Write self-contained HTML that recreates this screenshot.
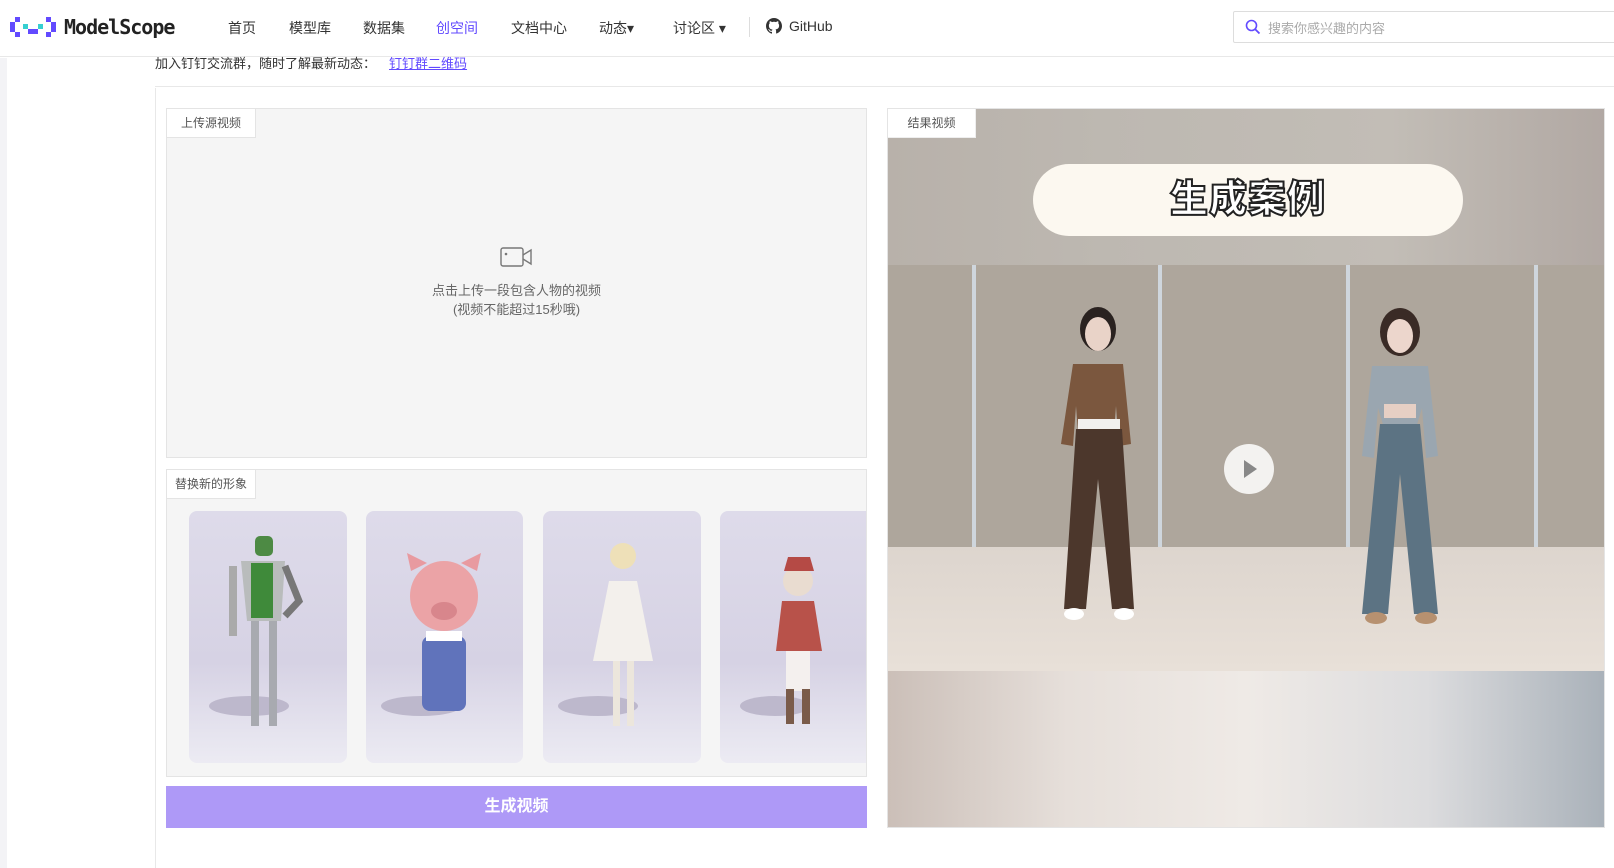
<!DOCTYPE html>
<html><head><meta charset="utf-8"><style>
*{margin:0;padding:0;box-sizing:border-box}
body{width:1614px;height:868px;overflow:hidden;background:#fff;font-family:"Liberation Sans","Noto Sans CJK SC",sans-serif;position:relative;color:#333}
.a{position:absolute}
.nav{font-size:14px;color:#333;top:18px}
.tab{background:#fff;border-right:1px solid #e4e4e4;border-bottom:1px solid #e4e4e4;font-size:12px;color:#555;text-align:center;line-height:29px}
.card{border-radius:8px;background:linear-gradient(#dedbea,#d6d2e4 60%,#ecebf3);overflow:hidden}
</style></head><body>
<div class="a" style="left:0;top:0;width:1614px;height:57px;border-bottom:1px solid #e8e8e8;background:#fff"></div>
<svg class="a" style="left:10px;top:14px" width="46" height="26" viewBox="0 0 46 26">
<rect x="0" y="8" width="5" height="10" fill="#624aff"/><rect x="5" y="3" width="5" height="5" fill="#624aff"/><rect x="5" y="18" width="5" height="5" fill="#624aff"/>
<rect x="41" y="8" width="5" height="10" fill="#624aff"/><rect x="36" y="3" width="5" height="5" fill="#624aff"/><rect x="36" y="18" width="5" height="5" fill="#624aff"/>
<rect x="13" y="10" width="5" height="5" fill="#36cfd1"/><rect x="28" y="10" width="5" height="5" fill="#36cfd1"/><rect x="18" y="15" width="10" height="5" fill="#624aff"/></svg>
<div class="a" style="left:64px;top:15px;font-size:20px;font-weight:bold;color:#222;font-family:'DejaVu Sans Mono',monospace;letter-spacing:-1px">ModelScope</div>
<div class="a nav" style="left:228px">首页</div>
<div class="a nav" style="left:289px">模型库</div>
<div class="a nav" style="left:363px">数据集</div>
<div class="a nav" style="left:436px;color:#624aff">创空间</div>
<div class="a nav" style="left:511px">文档中心</div>
<div class="a nav" style="left:599px">动态▾</div>
<div class="a nav" style="left:673px">讨论区 ▾</div>
<div class="a" style="left:749px;top:17px;width:1px;height:20px;background:#ddd"></div>
<svg class="a" style="left:766px;top:18px" width="16" height="16" viewBox="0 0 16 16"><path fill="#333" d="M8 0C3.6 0 0 3.6 0 8c0 3.5 2.3 6.5 5.5 7.6.4.1.5-.2.5-.4v-1.4c-2.2.5-2.7-1-2.7-1-.4-.9-.9-1.200-.9-1.2-.7-.5.1-.5.1-.5.8.1 1.2.8 1.2.8.7 1.2 1.9.9 2.3.7.1-.5.3-.9.5-1.1-1.800-.2-3.600-.9-3.600-4 0-.9.3-1.600.8-2.100-.1-.2-.4-1 .1-2.1 0 0 .7-.2 2.2.8.6-.2 1.3-.3 2-.3s1.4.1 2 .3c1.5-1 2.2-.8 2.2-.8.4 1.1.2 1.9.1 2.1.5.6.8 1.3.8 2.1 0 3.1-1.9 3.7-3.6 3.9.3.3.6.8.6 1.5v2.2c0 .2.1.5.6.4C13.7 14.5 16 11.5 16 8c0-4.4-3.6-8-8-8z"/></svg>
<div class="a nav" style="left:789px">GitHub</div>
<div class="a" style="left:1233px;top:11px;width:400px;height:32px;border:1px solid #ddd;border-radius:2px"></div>
<svg class="a" style="left:1245px;top:19px" width="16" height="16" viewBox="0 0 16 16"><circle cx="6.5" cy="6.5" r="5" fill="none" stroke="#624aff" stroke-width="1.6"/><path d="M10.2 10.2L14.5 14.5" stroke="#624aff" stroke-width="1.8"/></svg>
<div class="a" style="left:1268px;top:18px;font-size:13px;color:#aaa">搜索你感兴趣的内容</div>
<div class="a" style="left:0;top:58px;width:7px;height:810px;background:#f3f3f6"></div>
<div class="a" style="left:155px;top:55px;width:1459px;height:32px;border-bottom:1px solid #e8e8e8"></div>
<div class="a" style="left:155px;top:56px;font-size:13px;line-height:16px;color:#333">加入钉钉交流群，随时了解最新动态：<span style="color:#624aff;text-decoration:underline;margin-left:13px">钉钉群二维码</span></div>
<div class="a" style="left:155px;top:88px;width:1px;height:780px;background:#e8e8e8"></div>
<div class="a" style="left:166px;top:108px;width:701px;height:350px;background:#f5f5f5;border:1px solid #e4e4e4"></div>
<div class="a tab" style="left:167px;top:109px;width:89px;height:29px">上传源视频</div>
<svg class="a" style="left:500px;top:246px" width="33" height="22" viewBox="0 0 33 22"><rect x="1" y="2" width="22" height="18" rx="2" fill="none" stroke="#777" stroke-width="1.4"/><circle cx="6" cy="8" r="1.3" fill="#777"/><path d="M23 9l8-5v14l-8-5" fill="none" stroke="#777" stroke-width="1.4"/></svg>
<div class="a" style="left:166px;width:701px;top:281px;text-align:center;font-size:13px;color:#666;line-height:19px">点击上传一段包含人物的视频<br>(视频不能超过15秒哦)</div>
<div class="a" style="left:166px;top:469px;width:701px;height:308px;background:#f5f5f5;border:1px solid #e4e4e4"></div>
<div class="a tab" style="left:167px;top:470px;width:89px;height:29px">替换新的形象</div>
<div class="a" style="left:167px;top:511px;width:699px;height:252px;overflow:hidden">
<div class="a card" style="left:22px;top:0;width:158px;height:252px"><svg width="158" height="252"><ellipse cx="60" cy="195" rx="40" ry="10" fill="#bdb8cc"/><rect x="66" y="25" width="18" height="20" rx="5" fill="#4d8a44"/><path d="M52 50h44l-4 60H58z" fill="#b9bcbc"/><path d="M62 52h22v55H62z" fill="#3f8a3a"/><rect x="62" y="110" width="8" height="105" fill="#a8aab0"/><rect x="80" y="110" width="8" height="105" fill="#a8aab0"/><rect x="40" y="55" width="8" height="70" fill="#aaa"/><path d="M96 55l14 35-14 15" stroke="#777" stroke-width="7" fill="none"/></svg></div>
<div class="a card" style="left:199px;top:0;width:157px;height:252px"><svg width="157" height="252"><ellipse cx="55" cy="195" rx="40" ry="10" fill="#bdb8cc"/><ellipse cx="78" cy="85" rx="34" ry="35" fill="#eba3a6"/><path d="M45 60l-4-18 20 10zM111 60l4-18-20 10z" fill="#e89aa0"/><ellipse cx="78" cy="100" rx="13" ry="9" fill="#d8868c"/><rect x="56" y="125" width="44" height="75" rx="8" fill="#6073bb"/><rect x="60" y="120" width="36" height="10" fill="#fff"/></svg></div>
<div class="a card" style="left:376px;top:0;width:158px;height:252px"><svg width="158" height="252"><ellipse cx="55" cy="195" rx="40" ry="10" fill="#bdb8cc"/><circle cx="80" cy="45" r="13" fill="#eee0b8"/><path d="M66 70h28l16 80H50z" fill="#f3f0ec"/><rect x="70" y="150" width="7" height="65" fill="#ece6dc"/><rect x="84" y="150" width="7" height="65" fill="#ece6dc"/></svg></div>
<div class="a card" style="left:553px;top:0;width:158px;height:252px"><svg width="158" height="252"><ellipse cx="55" cy="195" rx="35" ry="10" fill="#bdb8cc"/><circle cx="78" cy="70" r="15" fill="#e9dcd0"/><path d="M64 60h30l-4-14H68z" fill="#b54a45"/><path d="M62 90h32l8 50H56z" fill="#b8524a"/><rect x="66" y="140" width="24" height="40" fill="#f4f0ee"/><rect x="66" y="178" width="8" height="35" fill="#7a5b4a"/><rect x="82" y="178" width="8" height="35" fill="#7a5b4a"/></svg></div>
</div>
<div class="a" style="left:166px;top:786px;width:701px;height:42px;background:#ae99f7;color:#fff;font-size:16px;font-weight:bold;text-align:center;line-height:42px">生成视频</div>
<div class="a" style="left:887px;top:108px;width:718px;height:720px;overflow:hidden;border:1px solid #e4e4e4">
<div class="a" style="left:0;top:0;width:718px;height:157px;background:linear-gradient(90deg,#b8b1aa,#bdb8b1 30%,#c2bdb6 70%,#b1a8a3)"></div>
<div class="a" style="left:145px;top:55px;width:430px;height:72px;border-radius:36px;background:#fcf8f0;text-align:center;line-height:72px;font-size:38px;font-weight:900;color:#fff;-webkit-text-stroke:2px #222;letter-spacing:1px">生成案例</div>
<div class="a" style="left:0;top:156px;width:718px;height:282px;background:#aea69c"></div>
<div class="a" style="left:0;top:438px;width:718px;height:124px;background:linear-gradient(#ddd5ce,#e8e0d8)"></div>
<div class="a" style="left:84px;top:156px;width:4px;height:282px;background:#cfd6dd"></div>
<div class="a" style="left:270px;top:156px;width:4px;height:282px;background:#cfd6dd"></div>
<div class="a" style="left:458px;top:156px;width:4px;height:282px;background:#cfd6dd"></div>
<div class="a" style="left:646px;top:156px;width:4px;height:282px;background:#cfd6dd"></div>
<svg class="a" style="left:150px;top:195px" width="120" height="340" viewBox="0 0 120 340"><ellipse cx="60" cy="25" rx="18" ry="22" fill="#2a2220"/><ellipse cx="60" cy="30" rx="13" ry="17" fill="#e9d3c8"/><path d="M35 60h50l8 80-12 2-3-40-2 25H40l-2-25-3 40-12-2z" fill="#7b573e"/><rect x="40" y="115" width="42" height="12" fill="#f2f0ee"/><path d="M38 125h46l12 180H74l-14-130-12 130H26z" fill="#4c372c"/><ellipse cx="36" cy="310" rx="10" ry="6" fill="#fff"/><ellipse cx="86" cy="310" rx="10" ry="6" fill="#fff"/></svg>
<svg class="a" style="left:452px;top:195px" width="120" height="340" viewBox="0 0 120 340"><ellipse cx="60" cy="28" rx="20" ry="24" fill="#3a2b26"/><ellipse cx="60" cy="32" rx="13" ry="17" fill="#ecd6cc"/><path d="M32 62h56l10 90-12 2-4-50-6 20H44l-6-20-4 50-12-2z" fill="#9aa6b0"/><rect x="44" y="100" width="32" height="14" fill="#e6cfc4"/><path d="M40 120h40l18 190H74l-14-140-12 140H22z" fill="#5c7383"/><ellipse cx="36" cy="314" rx="11" ry="6" fill="#b79170"/><ellipse cx="86" cy="314" rx="11" ry="6" fill="#b79170"/></svg>
<div class="a" style="left:336px;top:335px;width:50px;height:50px;border-radius:50%;background:rgba(255,255,255,.85)"></div>
<svg class="a" style="left:354px;top:350px" width="16" height="20"><path d="M2 1l13 9-13 9z" fill="#888"/></svg>
<div class="a" style="left:0;top:562px;width:718px;height:158px;background:linear-gradient(90deg,#cbbfb8,#e6dfda 25%,#efeae6 50%,#dcdcde 75%,#a9b1b9)"></div>
<div class="a tab" style="left:0;top:0;width:88px;height:29px;border-color:#eee">结果视频</div>
</div>
</body></html>
